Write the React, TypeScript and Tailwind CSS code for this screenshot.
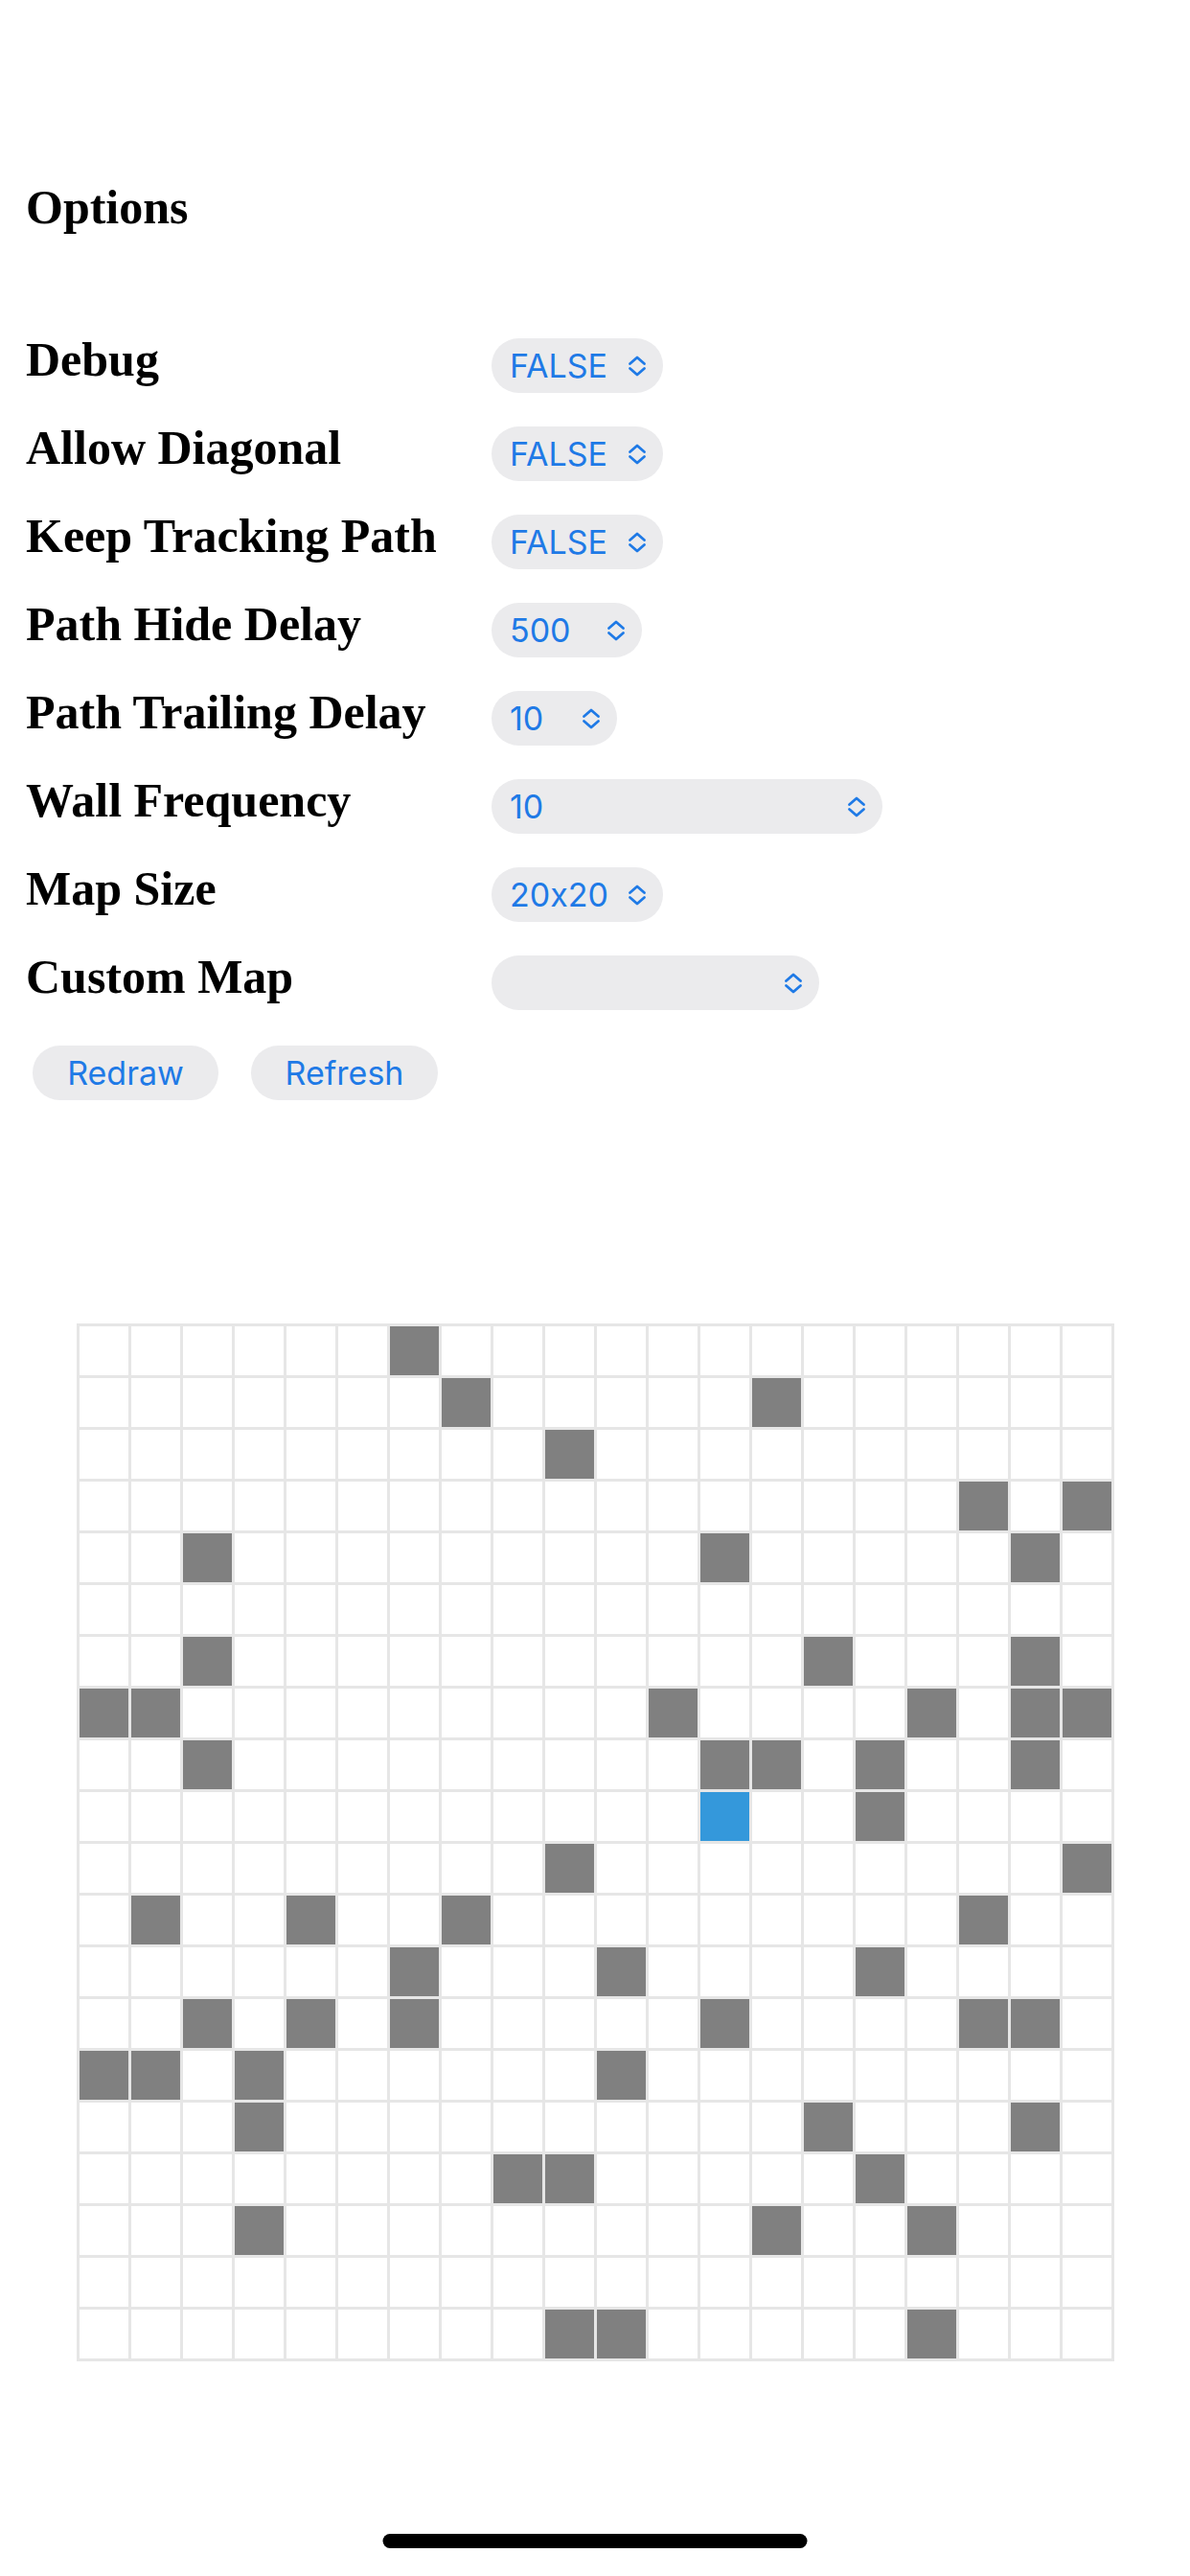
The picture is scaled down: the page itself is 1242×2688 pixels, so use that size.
import React from "react";

const options = [
  { label: "Debug", value: "FALSE", width: "w-[179px]" },
  { label: "Allow Diagonal", value: "FALSE", width: "w-[179px]" },
  { label: "Keep Tracking Path", value: "FALSE", width: "w-[179px]" },
  { label: "Path Hide Delay", value: "500", width: "w-[157px]" },
  { label: "Path Trailing Delay", value: "10", width: "w-[131px]" },
  { label: "Wall Frequency", value: "10", width: "w-[408px]" },
  { label: "Map Size", value: "20x20", width: "w-[179px]" },
  { label: "Custom Map", value: "", width: "w-[342px]" },
];

// wall columns for each of the 20 rows
const walls: number[][] = [
  [6],
  [7, 13],
  [9],
  [17, 19],
  [2, 12, 18],
  [],
  [2, 14, 18],
  [0, 1, 11, 16, 18, 19],
  [2, 12, 13, 15, 18],
  [15],
  [9, 19],
  [1, 4, 7, 17],
  [6, 10, 15],
  [2, 4, 6, 12, 17, 18],
  [0, 1, 3, 10],
  [3, 14, 18],
  [8, 9, 15],
  [3, 13, 16],
  [],
  [9, 10, 16],
];
const start = { row: 9, col: 12 };

function Chevrons() {
  return (
    <svg className="w-[20px] h-[24px] shrink-0" viewBox="0 0 20 24" fill="none" stroke="currentColor" strokeWidth="2.8" strokeLinecap="round" strokeLinejoin="round">
      <path d="M2.5 9.5 L10 3 L17.5 9.5" />
      <path d="M2.5 14.5 L10 21 L17.5 14.5" />
    </svg>
  );
}

function SelectPill({ value, width }: { value: string; width: string }) {
  return (
    <div className={`${width} h-[57px] rounded-full bg-[#ebebed] text-[#1f7ae6] flex items-center justify-between pl-[19px] pr-[17px] text-[34px] font-['Inter',sans-serif] [font-feature-settings:'calt'_0]`}>
      <span>{value}</span>
      <Chevrons />
    </div>
  );
}

function Cell({ kind }: { kind: "empty" | "wall" | "start" }) {
  if (kind === "wall") return <div className="w-[51px] h-[51px] bg-[#808080]" />;
  if (kind === "start") return <div className="w-[51px] h-[51px] bg-[#3498db]" />;
  return <div className="w-[51px] h-[51px] bg-white" />;
}

export default function App() {
  return (
    <div className="relative w-[1242px] h-[2688px] bg-white overflow-hidden">
      <div className="pt-[191px] pl-[27px]">
        <h3 className="text-[50px] leading-[50px] font-bold text-black font-['Liberation_Serif',serif]">Options</h3>
      </div>

      <div className="mt-[112px] pl-[27px] flex flex-col gap-[35px]">
        {options.map((opt) => (
          <div key={opt.label} className="flex items-center h-[57px]">
            <div className="w-[486px] pb-[12px] text-[50px] leading-[57px] font-bold text-black font-['Liberation_Serif',serif] whitespace-nowrap">
              {opt.label}
            </div>
            <SelectPill value={opt.value} width={opt.width} />
          </div>
        ))}
      </div>

      <div className="mt-[37px] pl-[34px] flex gap-[34px]">
        <button className="h-[57px] w-[194px] rounded-full bg-[#ebebed] text-[#1f7ae6] text-[34px] font-['Inter',sans-serif]">
          Redraw
        </button>
        <button className="h-[57px] w-[195px] rounded-full bg-[#ebebed] text-[#1f7ae6] text-[34px] font-['Inter',sans-serif]">
          Refresh
        </button>
      </div>

      <div className="mt-[233px] ml-[80px] w-[1083px] grid grid-cols-[repeat(20,51px)] gap-[3px] p-[3px] bg-[#e6e6e6]">
        {walls.map((row, r) =>
          Array.from({ length: 20 }, (_, c) => {
            const kind = r === start.row && c === start.col ? "start" : row.includes(c) ? "wall" : "empty";
            return <Cell key={`${r}-${c}`} kind={kind} />;
          })
        )}
      </div>

      <div className="absolute bottom-[29px] left-1/2 -translate-x-1/2 w-[443px] h-[15px] rounded-full bg-black" />
    </div>
  );
}
